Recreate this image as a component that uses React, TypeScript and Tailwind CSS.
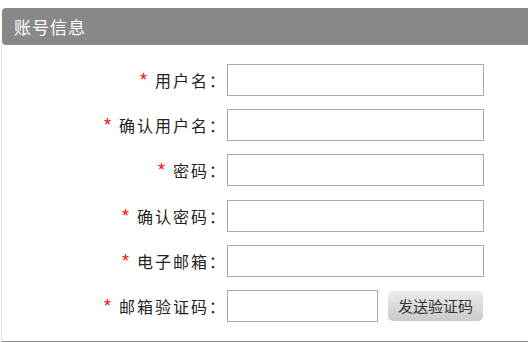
import { useState } from "react";

const campos = [
  { label: "用户名", ancho: "w-[257px]" },
  { label: "确认用户名", ancho: "w-[257px]" },
  { label: "密码", ancho: "w-[257px]" },
  { label: "确认密码", ancho: "w-[257px]" },
  { label: "电子邮箱", ancho: "w-[257px]" },
];

const Fila = ({ label, children }: { label: string; children: React.ReactNode }) => (
  <div className="flex flex-row items-center h-[32px]">
    <div className="w-[225px] flex flex-row justify-end items-center text-[16px] text-[#222]">
      <span className="text-[#f00] mr-[8px] font-['Liberation_Sans',sans-serif] text-[18px] leading-none">*</span>
      <span className="tracking-[2px]">{label}：</span>
    </div>
    {children}
  </div>
);

const App = () => {
  const [valores, setValores] = useState<Record<string, string>>({});

  return (
    <div className="w-[528px] h-[342px] bg-white pt-2 font-['Noto_Sans_CJK_SC','Noto_Sans',sans-serif] overflow-hidden">
      <div className="ml-[2px] h-[37px] bg-[#888888] rounded-l-[4px] flex items-center pl-[12px]">
        <h1 className="text-white text-[17px] tracking-[1px]">账号信息</h1>
      </div>
      <div className="ml-[1px] border-l border-[#e2e2e2] border-b-2 border-b-[#8a8a8a] pt-[19px] pb-[19px] flex flex-col gap-y-[13.2px]">
        {campos.map((campo) => (
          <Fila key={campo.label} label={campo.label}>
            <input
              type={campo.label.includes("密码") ? "password" : "text"}
              className={`${campo.ancho} h-[32px] border border-[#aaaaaa] px-2 outline-none`}
              value={valores[campo.label] || ""}
              onChange={(e) => setValores({ ...valores, [campo.label]: e.target.value })}
            />
          </Fila>
        ))}
        <Fila label="邮箱验证码">
          <input
            type="text"
            className="w-[151px] h-[32px] border border-[#aaaaaa] px-2 outline-none"
            onChange={(e) => setValores({ ...valores, codigo: e.target.value })}
          />
          <button className="ml-[10px] w-[95px] h-[30px] rounded-[5px] bg-gradient-to-b from-[#ececec] to-[#c9c9c9] text-[#333] text-[15px]">
            发送验证码
          </button>
        </Fila>
      </div>
    </div>
  );
};
export default App;
